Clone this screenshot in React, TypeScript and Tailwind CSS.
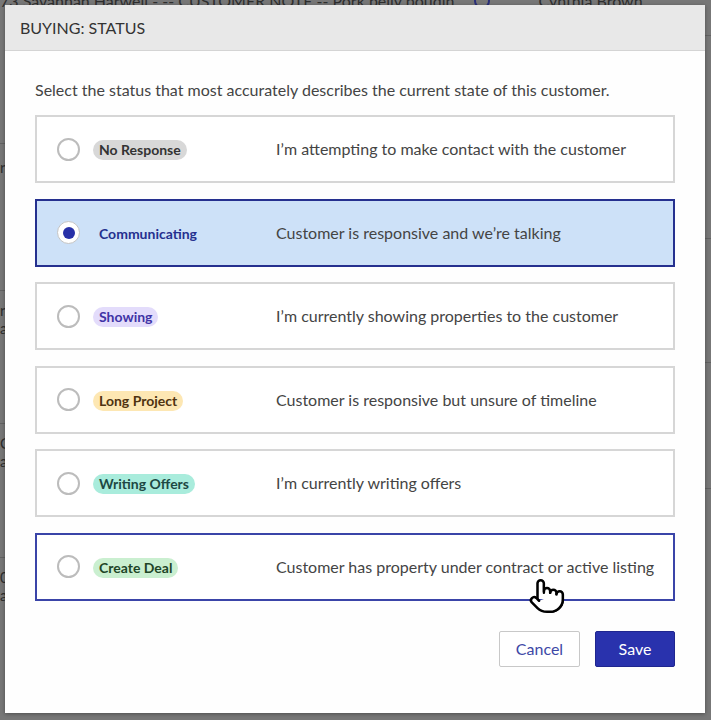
import React from "react";
import { Pointer } from "lucide-react";

const statuses = [
  {
    label: "No Response",
    badge: "bg-[#d8d8d8] text-[#333333]",
    description: "I’m attempting to make contact with the customer",
  },
  {
    label: "Communicating",
    badge: "bg-transparent text-[#25308f]",
    description: "Customer is responsive and we’re talking",
  },
  {
    label: "Showing",
    badge: "bg-[#e3dcfb] text-[#3f33a6]",
    description: "I’m currently showing properties to the customer",
  },
  {
    label: "Long Project",
    badge: "bg-[#fde7b3] text-[#4f3310]",
    description: "Customer is responsive but unsure of timeline",
  },
  {
    label: "Writing Offers",
    badge: "bg-[#a9ecdc] text-[#1d4843]",
    description: "I’m currently writing offers",
  },
  {
    label: "Create Deal",
    badge: "bg-[#caefd0] text-[#1e4527]",
    description: "Customer has property under contract or active listing",
  },
];

const selectedIndex = 1;
const hoverIndex = 5;

const App: React.FC = () => {
  return (
    <div
      className="relative w-[711px] h-[720px] overflow-hidden bg-[#777777]"
      style={{ fontFamily: "Lato, 'Liberation Sans', sans-serif" }}
    >
      {/* page behind the overlay */}
      <div className="flex flex-col h-full">
        <div className="flex items-center gap-2 -mt-[8px] h-[18px] text-[16px] text-[#2e2e2e] whitespace-nowrap">
          <span>73 Savannah Harwell - -- CUSTOMER NOTE -- Pork belly boudin</span>
          <span className="ml-3 w-[16px] h-[16px] rounded-full border-2 border-[#2a2f7a]" />
          <span className="ml-[40px]">Cynthia Brown</span>
        </div>
        <div className="flex flex-1 justify-between">
          <div className="flex flex-col w-[6px] text-[15px] text-[#2e2e2e] leading-[18px]">
            <div className="h-[134px] border-b border-[#626262]" />
            <div className="h-[147px] border-b border-[#626262] pt-[14px]">
              <div>r</div>
            </div>
            <div className="h-[133px] border-b border-[#626262] pt-[10px]">
              <div>r</div>
              <div>a</div>
            </div>
            <div className="h-[134px] border-b border-[#626262] pt-[10px]">
              <div>C</div>
              <div>a</div>
            </div>
            <div className="pt-[10px]">
              <div>0</div>
              <div>a</div>
            </div>
          </div>
          <div className="flex flex-col w-[6px]">
            <div className="h-[26px] border-b border-[#626262]" />
            <div className="h-[203px] border-b border-[#626262]" />
            <div className="h-[124px] border-b border-[#626262]" />
            <div className="h-[126px] border-b border-[#626262]" />
          </div>
        </div>
      </div>

      {/* modal */}
      <div className="absolute left-[5px] top-[5px] w-[700px] h-[708px] bg-[#fefefe] shadow-[0_1px_4px_rgba(0,0,0,0.35)] flex flex-col">
        <div className="h-[46px] bg-[#e8e8e8] border-b border-[#d4d4d4] flex items-center px-[15px] text-[16px] text-[#333333]">
          BUYING: STATUS
        </div>
        <div className="flex flex-col px-[30px] pt-[29px]">
          <p className="text-[16px] text-[#444444] leading-[20px] mb-[15px]">
            Select the status that most accurately describes the current state of this customer.
          </p>
          <div className="flex flex-col gap-[15.6px]">
            {statuses.map((s, i) => {
              const selected = i === selectedIndex;
              const hover = i === hoverIndex;
              return (
                <div
                  key={s.label}
                  className={
                    selected
                      ? "h-[68px] flex items-center border-2 border-[#25308f] bg-[#cde1f8] pl-[20px] pr-[10px]"
                      : hover
                        ? "h-[68px] flex items-center border-2 border-[#3a44a8] bg-white pl-[20px] pr-[10px]"
                        : "h-[68px] flex items-center border-2 border-[#d6d6d6] bg-white pl-[20px] pr-[10px]"
                  }
                >
                  <div
                    className={
                      selected
                        ? "w-[23px] h-[23px] shrink-0 rounded-full bg-white border border-[#c4c4c4] flex items-center justify-center"
                        : "w-[23px] h-[23px] shrink-0 rounded-full bg-white border-2 border-[#bcbcbc]"
                    }
                  >
                    {selected && <div className="w-[12px] h-[12px] rounded-full bg-[#2730a8]" />}
                  </div>
                  <div className="w-[196px] shrink-0 pl-[13px]">
                    <span
                      className={`inline-block h-[20px] leading-[20px] px-[6px] rounded-full text-[14px] font-bold ${s.badge}`}
                    >
                      {s.label}
                    </span>
                  </div>
                  <div className="text-[16px] text-[#444444] whitespace-nowrap">{s.description}</div>
                </div>
              );
            })}
          </div>
          <div className="flex justify-end gap-[15px] mt-[30px]">
            <button className="w-[81px] h-[36px] bg-white border border-[#c8c8c8] rounded-[2px] text-[16px] text-[#3d48a6]">
              Cancel
            </button>
            <button className="w-[80px] h-[36px] bg-[#2932ad] border border-[#1f268f] rounded-[2px] text-[16px] text-white">
              Save
            </button>
          </div>
        </div>
      </div>

      {/* mouse cursor */}
      <Pointer
        className="absolute left-[528px] top-[577px] w-[38px] h-[38px]"
        fill="white"
        stroke="black"
        strokeWidth={1.6}
      />
    </div>
  );
};

export default App;
